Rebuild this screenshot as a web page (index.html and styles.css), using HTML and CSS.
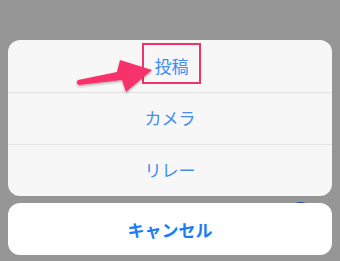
FILE: index.html
```html
<!DOCTYPE html>
<html lang="ja">
<head>
<meta charset="utf-8">
<link rel="stylesheet" href="styles.css">
</head>
<body>
<div class="screen">
  <div class="peek"></div>
  <div class="sheet">
    <div class="group">
      <div class="row row-first"><span class="label boxed">投稿</span></div>
      <div class="row">カメラ</div>
      <div class="row">リレー</div>
    </div>
    <div class="cancel">キャンセル</div>
  </div>
  <svg class="arrow" width="340" height="261" viewBox="0 0 340 261">
    <defs>
      <filter id="sh" x="-20%" y="-20%" width="140%" height="160%">
        <feDropShadow dx="0" dy="1.5" stdDeviation="1.2" flood-color="#000" flood-opacity="0.3"/>
      </filter>
    </defs>
    <path d="M78 80 L117 72 L120 60 L152 70 L126 92 L122 80 L79 85 Q75 83 78 80 Z" fill="#f7306a" filter="url(#sh)"/>
  </svg>
</div>
</body>
</html>
```
FILE: styles.css
```css
html, body {
  margin: 0;
  padding: 0;
}
body {
  width: 340px;
  height: 261px;
  overflow: hidden;
  background: #969696;
  font-family: "Noto Sans CJK JP", "Noto Sans", sans-serif;
}
.screen {
  position: relative;
  width: 340px;
  height: 261px;
}
.sheet {
  position: relative;
  padding: 40px 8px 0 8px;
  display: flex;
  flex-direction: column;
  gap: 7px;
}
.group {
  background: #f7f7f7;
  border-radius: 12px;
  overflow: hidden;
  display: flex;
  flex-direction: column;
}
.row {
  height: 52px;
  display: flex;
  align-items: center;
  justify-content: center;
  color: #438cf2;
  font-size: 17px;
  border-top: 1px solid #e3e3e3;
  box-sizing: border-box;
  padding-bottom: 3px;
}
.row-first {
  border-top: none;
  padding-bottom: 0;
}
.boxed {
  display: flex;
  align-items: center;
  justify-content: center;
  width: 59px;
  height: 41px;
  box-sizing: border-box;
  border: 2px solid #ee3468;
  margin-top: -5px;
  margin-left: 3px;
  padding-top: 3px;
}
.cancel {
  height: 52px;
  background: #ffffff;
  border-radius: 12px;
  display: flex;
  align-items: center;
  justify-content: center;
  color: #1a7cf7;
  font-size: 17px;
  font-weight: 700;
}
.peek {
  position: absolute;
  left: 293px;
  top: 202px;
  width: 15px;
  height: 8px;
  border-radius: 50%;
  background: #1d4fc4;
}
.arrow {
  position: absolute;
  left: 0;
  top: 0;
}
```
